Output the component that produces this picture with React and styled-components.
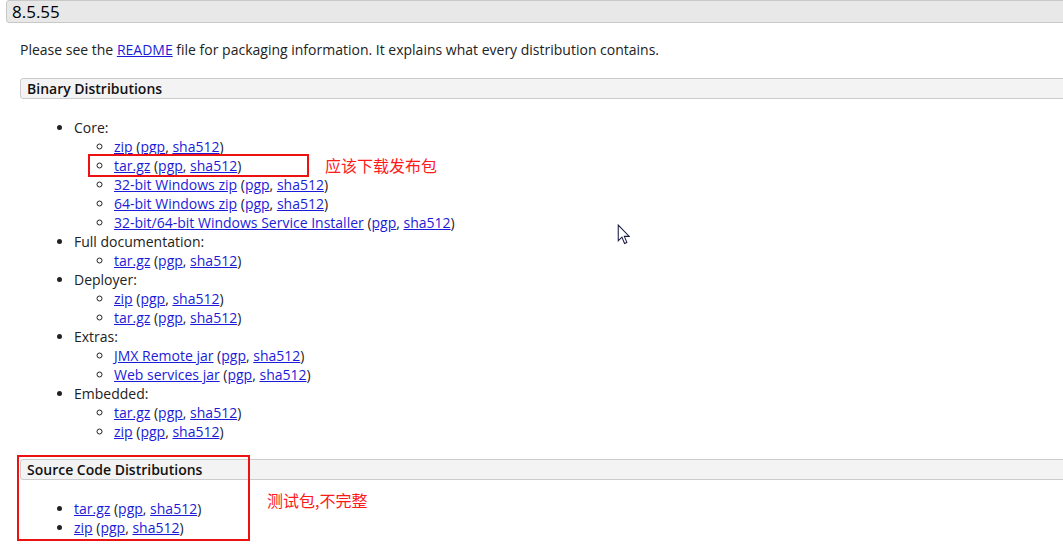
import styled, { createGlobalStyle } from "styled-components";

const GlobalStyle = createGlobalStyle`
  html, body {
    margin: 0;
    padding: 0;
    background: #fff;
    overflow: hidden;
  }
  body {
    font-family: "Open Sans", "Noto Sans", sans-serif;
    font-size: 14px;
    color: #222;
  }
`;

const binary = [
  {
    label: "Core:",
    items: [
      { name: "zip" },
      { name: "tar.gz" },
      { name: "32-bit Windows zip" },
      { name: "64-bit Windows zip" },
      { name: "32-bit/64-bit Windows Service Installer" },
    ],
  },
  { label: "Full documentation:", items: [{ name: "tar.gz" }] },
  { label: "Deployer:", items: [{ name: "zip" }, { name: "tar.gz" }] },
  { label: "Extras:", items: [{ name: "JMX Remote jar" }, { name: "Web services jar" }] },
  { label: "Embedded:", items: [{ name: "tar.gz" }, { name: "zip" }] },
];

const Download = ({ name }) => (
  <>
    <Link href="#">{name}</Link> (<Link href="#">pgp</Link>, <Link href="#">sha512</Link>)
  </>
);

const App = () => {
  return (
    <>
      <GlobalStyle />
      <Page>
        <VersionBar>8.5.55</VersionBar>
        <Content>
          <Intro>
            Please see the <Link href="#">README</Link> file for packaging information. It explains what every
            distribution contains.
          </Intro>

          <SectionBar>Binary Distributions</SectionBar>
          <List>
            {binary.map((group) => (
              <li key={group.label}>
                {group.label}
                <SubList>
                  {group.items.map((item, i) => (
                    <li key={i}>
                      <Download name={item.name} />
                    </li>
                  ))}
                </SubList>
              </li>
            ))}
          </List>

          <SectionBar>Source Code Distributions</SectionBar>
          <List>
            <li><Download name="tar.gz" /></li>
            <li><Download name="zip" /></li>
          </List>
        </Content>

        {/* annotations drawn over the page */}
        <MarkBox $left={88} $top={154} $width={221} $height={23} />
        <Note $left={325} $top={156}>应该下载发布包</Note>

        <MarkBox $left={17} $top={455} $width={233} $height={86} />
        <Note $left={267} $top={491}>测试包,不完整</Note>

        <Cursor viewBox="0 0 12 20" width="13" height="21">
          <path
            d="M1 1 L1 16 L4.5 12.5 L7 18.5 L9.2 17.5 L6.8 11.8 L11.5 11.8 Z"
            fill="#fff"
            stroke="#1a1a40"
            strokeWidth="1"
          />
        </Cursor>
      </Page>
    </>
  );
};

const Page = styled.div`
  position: relative;
  width: 1063px;
  height: 544px;
  overflow: hidden;
`;

const VersionBar = styled.div`
  margin: 0 -10px 0 6px;
  height: 21px;
  line-height: 21px;
  padding-left: 5px;
  background: #e8e8e8;
  border: 1px solid #c8c8c8;
  border-radius: 3px;
  font-size: 17px;
  color: #000;
`;

const Content = styled.div`
  padding-left: 20px;
`;

const Intro = styled.p`
  margin: 17px 0 19px 0;
  line-height: 19px;
  color: #222;
`;

const SectionBar = styled.div`
  margin-right: -10px;
  height: 19px;
  line-height: 19px;
  padding-left: 6px;
  background: #f3f3f3;
  border: 1px solid #cccccc;
  border-radius: 3px;
  font-weight: 600;
  color: #111;
`;

const List = styled.ul`
  margin: 19px 0 18px 0;
  padding-left: 54px;
  list-style: disc;
  line-height: 19px;
`;

const SubList = styled.ul`
  margin: 0;
  padding-left: 40px;
  list-style: circle;
`;

const Link = styled.a`
  color: #1c1cd8;
  text-decoration: underline;
`;

const MarkBox = styled.div`
  position: absolute;
  left: ${(p) => p.$left}px;
  top: ${(p) => p.$top}px;
  width: ${(p) => p.$width}px;
  height: ${(p) => p.$height}px;
  box-sizing: border-box;
  border: 2px solid #ee1111;
`;

const Note = styled.div`
  position: absolute;
  left: ${(p) => p.$left}px;
  top: ${(p) => p.$top}px;
  font-family: "Noto Sans CJK SC", sans-serif;
  font-size: 16px;
  line-height: 18px;
  color: #ff1a1a;
  white-space: nowrap;
`;

const Cursor = styled.svg`
  position: absolute;
  left: 617px;
  top: 224px;
`;

export default App;
